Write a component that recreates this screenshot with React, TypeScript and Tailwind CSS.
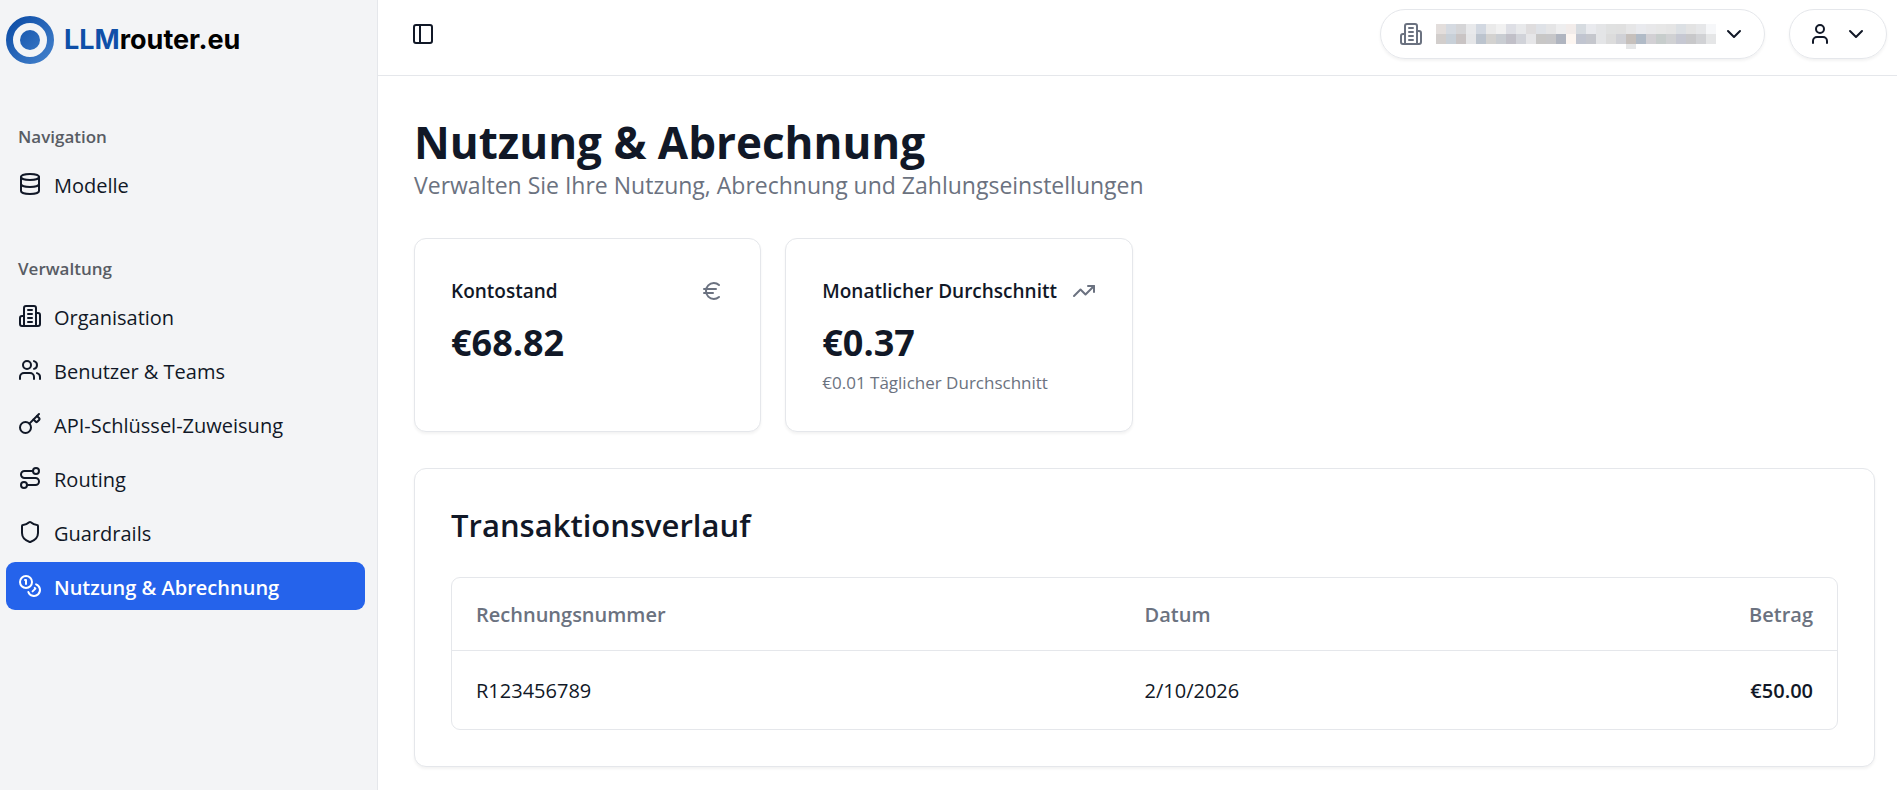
import type { ReactNode, SVGProps } from "react";
import {
  ChevronDown,
  Coins,
  Database,
  Euro,
  Key,
  PanelLeft,
  Route,
  Shield,
  TrendingUp,
  User,
  Users,
} from "lucide-react";

function BuildingIcon(props: SVGProps<SVGSVGElement>) {
  return (
    <svg
      viewBox="0 0 24 24"
      fill="none"
      stroke="currentColor"
      strokeWidth="2"
      strokeLinecap="round"
      strokeLinejoin="round"
      aria-hidden="true"
      {...props}
    >
      <path d="M6 22V4a2 2 0 0 1 2-2h8a2 2 0 0 1 2 2v18Z" />
      <path d="M6 12H4a2 2 0 0 0-2 2v6a2 2 0 0 0 2 2h2" />
      <path d="M18 9h2a2 2 0 0 1 2 2v9a2 2 0 0 1-2 2h-2" />
      <path d="M10 6h4M10 10h4M10 14h4M10 18h4" />
    </svg>
  );
}

function Logo() {
  return (
    <a href="#" className="flex items-center gap-[10px]">
      <svg viewBox="0 0 48 48" className="size-12 shrink-0" aria-hidden="true">
        <defs>
          <linearGradient id="logo" gradientUnits="userSpaceOnUse" x1="6" y1="6" x2="42" y2="42">
            <stop offset="0" stopColor="#0f4fa8" />
            <stop offset="1" stopColor="#3f7dc9" />
          </linearGradient>
        </defs>
        <circle cx="24" cy="24" r="20.5" fill="none" stroke="url(#logo)" strokeWidth="7" />
        <circle cx="24" cy="24" r="10" fill="url(#logo)" />
      </svg>
      <span className="font-['Inter',sans-serif] text-[27px] leading-9 font-bold text-black">
        <span className="text-[#0f4fa8]">LLM</span>router.eu
      </span>
    </a>
  );
}

function NavGroup({ label, children }: { label: string; children: ReactNode }) {
  return (
    <section>
      <h2 className="flex h-12 items-center px-3 pt-[2px] text-[17px] font-semibold text-[#585c64]">{label}</h2>
      <ul className="flex flex-col gap-[6px]">{children}</ul>
    </section>
  );
}

function NavItem({ icon, label, active }: { icon: ReactNode; label: string; active?: boolean }) {
  return (
    <li>
      <a
        href="#"
        aria-current={active ? "page" : undefined}
        className={
          active
            ? "flex h-12 items-center gap-3 rounded-[9px] bg-[#2563eb] px-3 text-[20px] font-semibold text-white"
            : "flex h-12 items-center gap-3 rounded-[9px] px-3 text-[20px]"
        }
      >
        {icon}
        <span className="pt-[3px]">{label}</span>
      </a>
    </li>
  );
}

const maskTop = [
  "#e3dedc", "#d5dae1", "#d5d5d7", "#e8e9eb", "#d2d8e1", "#eaeaea", "#f1f1f1",
  "#dedfe5", "#e8e9eb", "#dfddde", "#dfe2e7", "#e5e5e6", "#eeeeef", "#f2ecea",
  "#d6dbe0", "#e9eaee", "#e4e5e7", "#e0e1e1", "#e0e0e0", "#e6e6e7", "#e9eaee",
  "#e8e8ea", "#e7e7e7", "#e5e5e5", "#dce0e4", "#e3e3e3", "#e6e7e9", "#f6f7f9",
];
const maskBottom = [
  "#d2cecc", "#c8d0d8", "#c9c4c4", "#e5e6e8", "#bcc4ce", "#d3d2d0", "#c9cdd2",
  "#c1c0c8", "#d1d3d9", "#e6e6e8", "#c8c7c6", "#c7c7c9", "#b0b5c0", "#fdf6f1",
  "#c1c5d0", "#c5c7cd", "#e4e5e7", "#dcdcdc", "#d0d1d6", "#c6c0bc", "#b1bbc7",
  "#d2d0d4", "#c7cdcc", "#d0d1d3", "#c6c8d2", "#c8c8ca", "#d1d2d5", "#e5e6e7",
];

function MaskedName() {
  return (
    <svg viewBox="0 0 280 30" className="mt-[10px] h-[30px] w-[280px]" shapeRendering="crispEdges" aria-hidden="true">
      {maskTop.map((fill, i) => (
        <rect key={i} x={i * 10} y="0" width="10" height="10" fill={fill} />
      ))}
      {maskBottom.map((fill, i) => (
        <rect key={i} x={i * 10} y="10" width="10" height="10" fill={fill} />
      ))}
      <rect x="190" y="20" width="10" height="5" fill="#e5e6e7" />
    </svg>
  );
}

function StatCard({ title, icon, value, note }: { title: string; icon: ReactNode; value: string; note?: string }) {
  return (
    <article className="rounded-xl border border-[#e5e7eb] bg-white p-9 shadow-[0_2px_3px_rgba(0,0,0,0.05)]">
      <div className="flex h-8 items-center justify-between">
        <h2 className="text-[19px] leading-8 font-semibold whitespace-nowrap">{title}</h2>
        <span className="text-[#6b7280]">{icon}</span>
      </div>
      <p className="mt-3 text-[36px] leading-[48px] font-bold">{value}</p>
      {note && <p className="mt-1 text-[17px] leading-6 text-[#6b7280]">{note}</p>}
    </article>
  );
}

export default function App() {
  return (
    <div className="flex min-h-screen bg-white font-['Open_Sans',sans-serif] text-[#111827]">
      <aside className="w-[378px] shrink-0 border-r border-[#e5e7eb] bg-[#f3f4f6] pt-4 pr-3 pl-[6px]">
        <Logo />
        <nav className="mt-12 flex flex-col gap-9">
          <NavGroup label="Navigation">
            <NavItem icon={<Database />} label="Modelle" />
          </NavGroup>
          <NavGroup label="Verwaltung">
            <NavItem icon={<BuildingIcon className="size-6" />} label="Organisation" />
            <NavItem icon={<Users />} label="Benutzer & Teams" />
            <NavItem icon={<Key />} label="API-Schlüssel-Zuweisung" />
            <NavItem icon={<Route />} label="Routing" />
            <NavItem icon={<Shield />} label="Guardrails" />
            <NavItem icon={<Coins />} label="Nutzung & Abrechnung" active />
          </NavGroup>
        </nav>
      </aside>

      <div className="min-w-0 flex-1">
        <header className="flex items-center justify-between border-b border-[#e5e7eb] pt-[9px] pr-[10px] pb-4 pl-[33px]">
          <button type="button" aria-label="Seitenleiste umschalten">
            <PanelLeft />
          </button>
          <div className="flex gap-6">
            <button
              type="button"
              aria-label="Organisation wählen"
              className="flex h-[50px] items-center rounded-full border border-[#e5e7eb] px-[18px] shadow-[0_2px_3px_rgba(0,0,0,0.05)]"
            >
              <BuildingIcon className="mr-[13px] size-6 text-[#6b7280]" />
              <MaskedName />
              <ChevronDown className="ml-[6px]" />
            </button>
            <button
              type="button"
              aria-label="Benutzermenü"
              className="flex h-[50px] items-center gap-3 rounded-full border border-[#e5e7eb] px-[18px] shadow-[0_2px_3px_rgba(0,0,0,0.05)]"
            >
              <User />
              <ChevronDown />
            </button>
          </div>
        </header>

        <main className="pt-9 pr-[22px] pb-6 pl-9">
          <h1 className="text-[44px] leading-[60px] font-bold">Nutzung & Abrechnung</h1>
          <p className="text-[23px] leading-[26px] text-[#6b7280]">
            Verwalten Sie Ihre Nutzung, Abrechnung und Zahlungseinstellungen
          </p>

          <div className="mt-10 grid grid-cols-4 gap-6">
            <StatCard title="Kontostand" icon={<Euro />} value="€68.82" />
            <StatCard
              title="Monatlicher Durchschnitt"
              icon={<TrendingUp />}
              value="€0.37"
              note="€0.01 Täglicher Durchschnitt"
            />
          </div>

          <section className="mt-9 rounded-xl border border-[#e5e7eb] bg-white p-9 shadow-[0_2px_3px_rgba(0,0,0,0.05)]">
            <h2 className="text-[31px] leading-10 font-semibold">Transaktionsverlauf</h2>
            <div className="mt-8 overflow-hidden rounded-[9px] border border-[#e5e7eb]">
              <table className="w-full text-[20px]">
                <thead>
                  <tr className="h-[72px] border-b border-[#e5e7eb] text-left text-[#6b7280]">
                    <th className="w-[calc(50%-32px)] px-6 pt-[3px] font-semibold">Rechnungsnummer</th>
                    <th className="px-6 pt-[3px] font-semibold">Datum</th>
                    <th className="px-6 pt-[3px] text-right font-semibold">Betrag</th>
                  </tr>
                </thead>
                <tbody>
                  <tr className="h-[79px]">
                    <td className="px-6 pt-[3px]">R123456789</td>
                    <td className="px-6 pt-[3px]">2/10/2026</td>
                    <td className="px-6 pt-[3px] text-right font-semibold">€50.00</td>
                  </tr>
                </tbody>
              </table>
            </div>
          </section>
        </main>
      </div>
    </div>
  );
}
